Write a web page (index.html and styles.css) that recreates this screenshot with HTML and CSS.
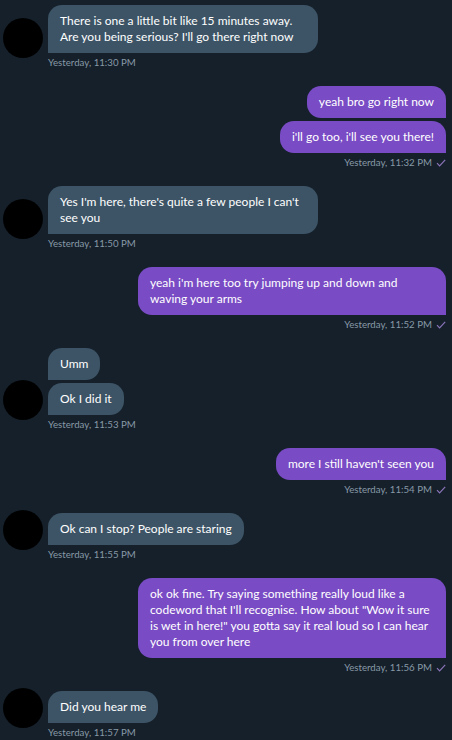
FILE: index.html
```html
<!DOCTYPE html>
<html>
    <head>
        <link rel="stylesheet" href="styles.css">
    </head>
    <body>
        <div class="chat">
            <div class="group in">
                <div class="row">
                    <div class="avatar"></div>
                    <div class="bubbles">
                        <div class="bubble">There is one a little bit like 15 minutes away. Are you being serious? I'll go there right now</div>
                    </div>
                </div>
                <div class="time">Yesterday, 11:30 PM</div>
            </div>
            <div class="group out">
                <div class="bubbles">
                    <div class="bubble">yeah bro go right now</div>
                    <div class="bubble">i'll go too, i'll see you there!</div>
                </div>
                <div class="time">Yesterday, 11:32 PM <svg class="tick" viewBox="0 0 10 8"><path d="M1 4.2 L3.6 6.8 L9.2 0.8"/></svg></div>
            </div>
            <div class="group in">
                <div class="row">
                    <div class="avatar"></div>
                    <div class="bubbles">
                        <div class="bubble">Yes I'm here, there's quite a few people I can't see you</div>
                    </div>
                </div>
                <div class="time">Yesterday, 11:50 PM</div>
            </div>
            <div class="group out">
                <div class="bubbles">
                    <div class="bubble">yeah i'm here too try jumping up and down and waving your arms</div>
                </div>
                <div class="time">Yesterday, 11:52 PM <svg class="tick" viewBox="0 0 10 8"><path d="M1 4.2 L3.6 6.8 L9.2 0.8"/></svg></div>
            </div>
            <div class="group in">
                <div class="row">
                    <div class="avatar"></div>
                    <div class="bubbles">
                        <div class="bubble">Umm</div>
                        <div class="bubble">Ok I did it</div>
                    </div>
                </div>
                <div class="time">Yesterday, 11:53 PM</div>
            </div>
            <div class="group out">
                <div class="bubbles">
                    <div class="bubble">more I still haven't seen you</div>
                </div>
                <div class="time">Yesterday, 11:54 PM <svg class="tick" viewBox="0 0 10 8"><path d="M1 4.2 L3.6 6.8 L9.2 0.8"/></svg></div>
            </div>
            <div class="group in">
                <div class="row">
                    <div class="avatar"></div>
                    <div class="bubbles">
                        <div class="bubble">Ok can I stop? People are staring</div>
                    </div>
                </div>
                <div class="time">Yesterday, 11:55 PM</div>
            </div>
            <div class="group out">
                <div class="bubbles">
                    <div class="bubble">ok ok fine. Try saying something really loud like a codeword that I'll recognise. How about "Wow it sure is wet in here!" you gotta say it real loud so I can hear you from over here</div>
                </div>
                <div class="time">Yesterday, 11:56 PM <svg class="tick" viewBox="0 0 10 8"><path d="M1 4.2 L3.6 6.8 L9.2 0.8"/></svg></div>
            </div>
            <div class="group in">
                <div class="row">
                    <div class="avatar"></div>
                    <div class="bubbles">
                        <div class="bubble">Did you hear me</div>
                    </div>
                </div>
                <div class="time">Yesterday, 11:57 PM</div>
            </div>
        </div>
    </body>
</html>
```

FILE: styles.css
```css
body {
    margin: 0;
    background-color: #15202b;
    color: white;
    font-family: Lato, "Open Sans", sans-serif;
}
.chat {
    display: flex;
    flex-direction: column;
    gap: 17px;
    padding: 5px 6px 0 0;
}
.row {
    display: flex;
    align-items: flex-end;
    gap: 5px;
    padding-left: 3px;
}
.avatar {
    flex: none;
    width: 40px;
    height: 40px;
    margin: -20px 0 -5px 0;
    border-radius: 50%;
    background-color: black;
}
.bubbles {
    display: flex;
    flex-direction: column;
    gap: 3px;
}
.in .bubbles {
    align-items: flex-start;
}
.out .bubbles {
    align-items: flex-end;
}
.bubble {
    padding: 8px 12px;
    font-size: 12px;
    line-height: 16px;
    border-radius: 14px;
}
.in .bubble {
    max-width: 246px;
    background-color: #3d5466;
    border-bottom-left-radius: 0;
}
.out .bubble {
    max-width: 284px;
    background-color: #794bc4;
    border-bottom-right-radius: 0;
}
.time {
    margin-top: 3px;
    font-size: 9.7px;
    line-height: 13px;
    color: #8899a6;
}
.in .time {
    padding-left: 48px;
}
.out .time {
    display: flex;
    justify-content: flex-end;
    align-items: center;
    gap: 4px;
}
.tick {
    width: 10px;
    height: 8px;
    fill: none;
    stroke: #8a74b8;
    stroke-width: 1.2;
}
```
